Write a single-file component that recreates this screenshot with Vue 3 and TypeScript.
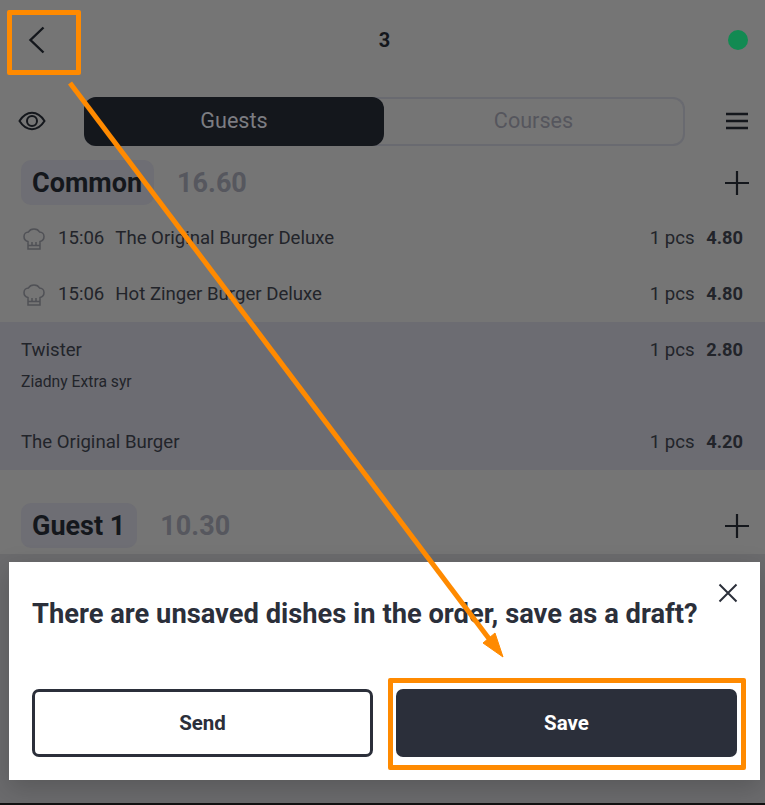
<template>
  <div class="screen">
    <header class="topbar">
      <button class="icon-btn back" aria-label="Back">
        <svg width="18" height="28" viewBox="0 0 18 28" fill="none">
          <path d="M15.5 1.5 2.5 14l13 12.5" stroke="#14171c" stroke-width="2.4" />
        </svg>
      </button>
      <span class="table-no">3</span>
      <span class="status"></span>
    </header>

    <div class="tabs-row">
      <svg class="eye" width="28" height="20" viewBox="0 0 28 20" fill="none" stroke="#14171c" stroke-width="2">
        <path d="M1.5 10C5 4.5 9 1.8 14 1.8S23 4.5 26.5 10C23 15.500 19 18.200 14 18.200S5 15.500 1.500 10Z" />
        <circle cx="14" cy="10" r="5" />
      </svg>
      <div class="tabs">
        <div class="tab active">Guests</div>
        <div class="tab">Courses</div>
      </div>
      <svg class="menu" width="24" height="18" viewBox="0 0 24 18" stroke="#14171c" stroke-width="2.4">
        <path d="M1 2h22M1 9h22M1 16h22" />
      </svg>
    </div>

    <section class="group common">
      <div class="group-head">
        <span class="pill">Common</span>
        <span class="sum">16.60</span>
        <svg class="plus" width="26" height="26" viewBox="0 0 26 26" stroke="#14171c" stroke-width="2.2">
          <path d="M13 1v24M1 13h24" />
        </svg>
      </div>

      <div class="sent">
        <div v-for="row in sentRows" :key="row.name" class="row">
          <svg class="chef" width="22" height="22" viewBox="0 0 22 22" fill="none" stroke="#505156" stroke-width="1.500">
            <path d="M5 13.500C2.500 13 1 11 1 8.500 1 6 3 4 5.500 4 6.500 2 8.500 1 11 1s4.500 1 5.500 3C19 4 21 6 21 8.500 21 11 19.500 13 17 13.500V21H5Z" />
            <path d="M5 17.500h12M9 14v3.500M13 14v3.500" />
          </svg>
          <span class="time">{{ row.time }}</span>
          <span class="name">{{ row.name }}</span>
          <span class="qty">{{ row.qty }}</span>
          <span class="price">{{ row.price }}</span>
        </div>
      </div>

      <div class="draft">
        <div class="draft-item first">
          <div class="line">
            <span class="name">Twister</span>
            <span class="qty">1 pcs</span>
            <span class="price">2.80</span>
          </div>
          <div class="note">Ziadny Extra syr</div>
        </div>
        <div class="draft-item">
          <div class="line">
            <span class="name">The Original Burger</span>
            <span class="qty">1 pcs</span>
            <span class="price">4.20</span>
          </div>
        </div>
      </div>
    </section>

    <section class="group guest">
      <div class="group-head">
        <span class="pill">Guest 1</span>
        <span class="sum">10.30</span>
        <svg class="plus" width="26" height="26" viewBox="0 0 26 26" stroke="#14171c" stroke-width="2.2">
          <path d="M13 1v24M1 13h24" />
        </svg>
      </div>
    </section>

    <div class="shade"></div>

    <div class="dialog">
      <button class="close" aria-label="Close">
        <svg width="20" height="20" viewBox="0 0 20 20" stroke="#2b2f3a" stroke-width="2">
          <path d="M1.500 1.500l17 17M18.500 1.500l-17 17" />
        </svg>
      </button>
      <h2 class="title">There are unsaved dishes in the order, save as a draft?</h2>
      <div class="actions">
        <button class="btn outline">Send</button>
        <button class="btn solid">Save</button>
      </div>
    </div>

    <!-- tutorial marks on top of the screenshot -->
    <div class="mark mark-back"></div>
    <div class="mark mark-save"></div>
    <svg class="arrow" width="765" height="805" viewBox="0 0 765 805">
      <path d="M70 83 490 640" stroke="#ff8a00" stroke-width="5" fill="none" />
      <path d="M503 657 483 643 495 633Z" fill="#ff8a00" stroke="#ff8a00" stroke-width="1" />
    </svg>
  </div>
</template>

<script setup lang="ts">
interface OrderRow {
  time: string
  name: string
  qty: string
  price: string
}

const sentRows: OrderRow[] = [
  { time: '15:06', name: 'The Original Burger Deluxe', qty: '1 pcs', price: '4.80' },
  { time: '15:06', name: 'Hot Zinger Burger Deluxe', qty: '1 pcs', price: '4.80' }
]
</script>

<style>
html,
body {
  margin: 0;
  background: #757575;
}
</style>

<style scoped>
.screen {
  position: relative;
  width: 765px;
  height: 805px;
  overflow: hidden;
  display: flex;
  flex-direction: column;
  background: #757575;
  color: #1c1e24;
  font-family: Roboto, "Liberation Sans", sans-serif;
  border-bottom: 2px solid #111;
  box-sizing: border-box;
}

.topbar {
  height: 80px;
  flex: none;
  display: flex;
  align-items: center;
  justify-content: space-between;
  padding: 0 17px 0 28px;
  position: relative;
}

.icon-btn {
  background: none;
  border: 0;
  padding: 0;
  display: flex;
}

.table-no {
  position: absolute;
  left: 4px;
  right: 0;
  top: 29px;
  text-align: center;
  font-size: 20px;
  line-height: 23px;
  font-weight: 700;
  color: #14171c;
}

.status {
  width: 20px;
  height: 20px;
  border-radius: 50%;
  background: #128a52;
}

.tabs-row {
  height: 50px;
  margin-top: 16px;
  flex: none;
  display: flex;
  align-items: center;
  padding: 0 16px 0 18px;
}

.eye {
  flex: none;
}

.tabs {
  width: 601px;
  height: 49px;
  margin: 0 40px 0 38px;
  flex: none;
  display: flex;
  border: 2px solid #696a70;
  border-left: 0;
  border-radius: 12px;
  box-sizing: border-box;
}

.tab {
  flex: 1 1 0;
  display: flex;
  align-items: center;
  justify-content: center;
  font-size: 21.6px;
  color: #55565d;
  margin-top: -2px;
}

.tab.active {
  flex: none;
  width: 300px;
  background: #14171c;
  color: #7c7d82;
  border-radius: 12px;
  margin-bottom: -2px;
  padding-bottom: 1px;
}

.group-head {
  height: 45px;
  display: flex;
  align-items: center;
  padding: 0 15px 0 21px;
}

.common {
  margin-top: 14px;
}

.pill {
  padding: 0 12px 0 11px;
  height: 45px;
  line-height: 47px;
  border-radius: 10px;
  background: #6e6e74;
  font-size: 27px;
  font-weight: 700;
  color: #14171c;
}

.sum {
  margin-left: 23px;
  padding-top: 2px;
  font-size: 27px;
  line-height: 45px;
  font-weight: 700;
  color: #56575e;
}

.plus {
  margin-left: auto;
}

.sent {
  margin-top: 5px;
}

.row {
  height: 56px;
  display: flex;
  align-items: center;
  padding: 0 22px 0 23px;
  font-size: 18.6px;
  color: #22242a;
}

.chef {
  flex: none;
  margin-right: 13px;
  position: relative;
  top: 1px;
}

.time {
  margin-right: 11px;
}

.qty {
  margin-left: auto;
}

.price {
  width: 48.5px;
  padding-bottom: 2px;
  text-align: right;
  font-size: 18.3px;
  font-weight: 700;
}

.draft {
  background: #6c6c72;
  height: 148px;
  font-size: 18.6px;
  color: #22242a;
}

.draft-item {
  padding: 0 22px 0 21px;
}

.draft-item.first {
  height: 109px;
  padding-top: 17px;
  box-sizing: border-box;
}

.line {
  display: flex;
  align-items: center;
  height: 22px;
}

.note {
  margin-top: 11px;
  font-size: 15.7px;
}

.guest {
  margin-top: 33px;
}

.shade {
  flex: 1;
  margin-top: 6px;
  background: #6b6b6d;
}

.dialog {
  position: absolute;
  left: 9px;
  top: 562px;
  width: 751px;
  height: 218px;
  padding: 0 23px;
  box-sizing: border-box;
  background: #fff;
  box-shadow: 0 8px 24px rgba(0, 0, 0, 0.18);
  color: #2b2f3a;
}

.title {
  margin: 0;
  padding-top: 36px;
  height: 127px;
  box-sizing: border-box;
  font-size: 27.3px;
  line-height: 32px;
  font-weight: 700;
  white-space: nowrap;
}

.close {
  position: absolute;
  right: 22px;
  top: 21px;
  background: none;
  border: 0;
  padding: 0;
  display: flex;
}

.actions {
  display: flex;
  gap: 23px;
}

.btn {
  flex: none;
  width: 341px;
  height: 68px;
  padding: 0;
  border-radius: 7px;
  font-family: inherit;
  font-size: 20.5px;
  font-weight: 700;
  box-sizing: border-box;
}

.btn.outline {
  background: #fff;
  color: #2b2f3a;
  border: 3px solid #2b2f3a;
}

.btn.solid {
  background: #2b2f3a;
  color: #fff;
  border: 0;
}

.mark {
  position: absolute;
  border: 5px solid #ff8a00;
  border-radius: 2px;
  box-sizing: border-box;
}

.mark-back {
  left: 7px;
  top: 10px;
  width: 74px;
  height: 65px;
}

.mark-save {
  left: 388px;
  top: 678px;
  width: 358px;
  height: 92px;
}

.arrow {
  position: absolute;
  left: 0;
  top: 0;
  pointer-events: none;
}
</style>
